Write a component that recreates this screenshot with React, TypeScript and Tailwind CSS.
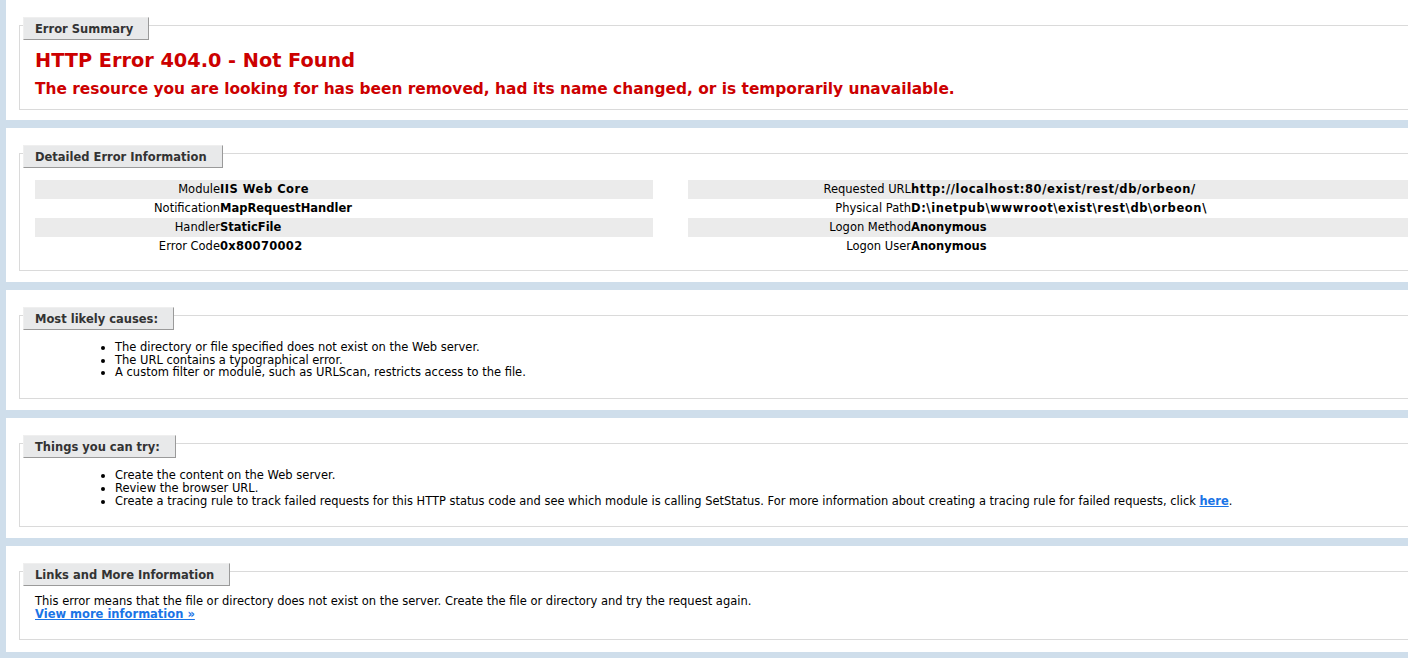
import type { ReactNode } from "react";

const leftRows = [
  { label: "Module", value: "IIS Web Core", track: "tracking-[0.5px]" },
  { label: "Notification", value: "MapRequestHandler", track: "" },
  { label: "Handler", value: "StaticFile", track: "" },
  { label: "Error Code", value: "0x80070002", track: "tracking-[0.3px]" },
];

const rightRows = [
  { label: "Requested URL", value: "http://localhost:80/exist/rest/db/orbeon/", track: "tracking-[0.6px]" },
  { label: "Physical Path", value: "D:\\inetpub\\wwwroot\\exist\\rest\\db\\orbeon\\", track: "tracking-[0.6px]" },
  { label: "Logon Method", value: "Anonymous", track: "" },
  { label: "Logon User", value: "Anonymous", track: "" },
];

interface SectionProps {
  title: string;
  panelClass: string;
  boxClass: string;
  children: ReactNode;
}

function Section({ title, panelClass, boxClass, children }: SectionProps) {
  return (
    <div className={`bg-white pl-[13px] pt-[25px] ${panelClass}`}>
      <div className={`border border-r-0 border-[#dadada] pl-[15px] ${boxClass}`}>
        <div className="-ml-[12px] -mt-[9px] flex">
          <span className="border border-t-[#efefef] border-l-[#efefef] border-r-[#9a9a9a] border-b-[#9a9a9a] bg-[#e8e9ea] pl-[11px] pr-[15px] pt-[5px] pb-[3px] text-[11.5px] font-bold leading-[13px] text-[#333]">
            {title}
          </span>
        </div>
        {children}
      </div>
    </div>
  );
}

function InfoTable({
  rows,
  labelClass,
}: {
  rows: { label: string; value: string; track: string }[];
  labelClass: string;
}) {
  return (
    <div className="flex flex-col">
      {rows.map((row, i) => (
        <div key={row.label} className={`flex h-[19px] items-center pt-[1px] ${i % 2 === 0 ? "bg-[#ebebeb]" : ""}`}>
          <span className={`shrink-0 text-right ${labelClass}`}>{row.label}</span>
          <span className={`font-bold whitespace-nowrap ${row.track}`}>{row.value}</span>
        </div>
      ))}
    </div>
  );
}

export default function App() {
  return (
    <div className="h-[658px] w-full overflow-hidden bg-[#cfdeeb] pl-[6px] font-['DejaVu_Sans',Verdana,sans-serif] text-[11.5px] text-black">
      <div className="flex flex-col gap-2">
        <Section title="Error Summary" panelClass="h-[120px]" boxClass="h-[85px]">
          <h2 className="mt-[9px] text-[19.3px] font-bold leading-[23px] text-[#cc0000]">
            HTTP Error 404.0 - Not Found
          </h2>
          <h3 className="mt-[8px] text-[15.4px] font-bold leading-[19px] text-[#cc0000] whitespace-nowrap">
            The resource you are looking for has been removed, had its name changed, or is temporarily unavailable.
          </h3>
        </Section>

        <Section title="Detailed Error Information" panelClass="h-[154px]" boxClass="h-[118px]">
          <div className="mt-[12px] flex gap-[35px]">
            <div className="w-[618px] shrink-0">
              <InfoTable rows={leftRows} labelClass="w-[185px]" />
            </div>
            <div className="flex-1">
              <InfoTable rows={rightRows} labelClass="w-[223px]" />
            </div>
          </div>
        </Section>

        <Section title="Most likely causes:" panelClass="h-[120px]" boxClass="h-[84px]">
          <ul className="mt-[11px] list-disc pl-[80px] leading-[12.5px]">
            <li>The directory or file specified does not exist on the Web server.</li>
            <li>The URL contains a typographical error.</li>
            <li>A custom filter or module, such as URLScan, restricts access to the file.</li>
          </ul>
        </Section>

        <Section title="Things you can try:" panelClass="h-[120px]" boxClass="h-[84px]">
          <ul className="mt-[11px] list-disc pl-[80px] leading-[13px]">
            <li>Create the content on the Web server.</li>
            <li>Review the browser URL.</li>
            <li className="text-[11.43px]">
              Create a tracing rule to track failed requests for this HTTP status code and see which module is calling
              SetStatus. For more information about creating a tracing rule for failed requests, click{" "}
              <a href="#" className="font-bold text-[#1a74e6] underline">
                here
              </a>
              .
            </li>
          </ul>
        </Section>

        <Section title="Links and More Information" panelClass="h-[106px]" boxClass="h-[69px]">
          <div className="mt-[9px] leading-[13px]">
            <p>This error means that the file or directory does not exist on the server. Create the file or directory and try the request again.</p>
            <a href="#" className="font-bold text-[#1a74e6] underline">
              View more information &raquo;
            </a>
          </div>
        </Section>
      </div>
    </div>
  );
}
